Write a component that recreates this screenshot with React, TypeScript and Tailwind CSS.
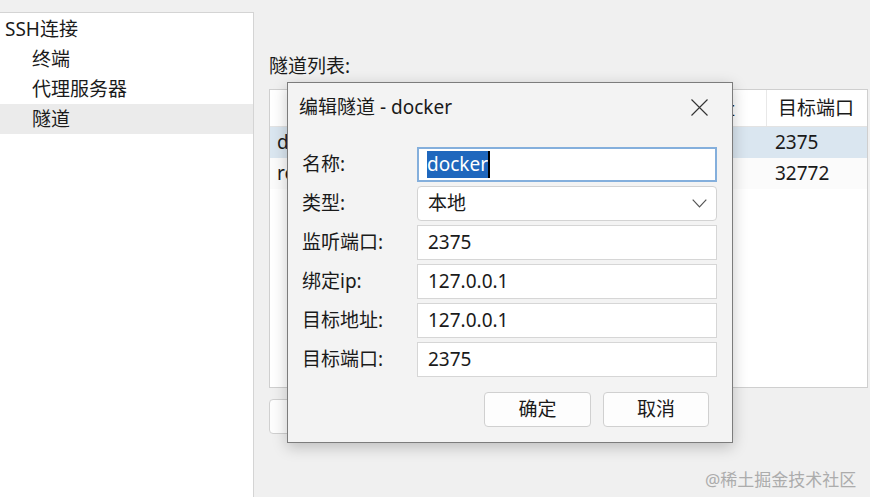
const treeItems = [
    { label: 'SSH连接', level: 0, selected: false },
    { label: '终端', level: 1, selected: false },
    { label: '代理服务器', level: 1, selected: false },
    { label: '隧道', level: 1, selected: true },
];

const tunnels = [
    { name: 'docker', type: '本地', listen: '2375', bind: '127.0.0.1', host: '127.0.0.1', port: '2375' },
    { name: 'redis', type: '本地', listen: '32772', bind: '127.0.0.1', host: '127.0.0.1', port: '32772' },
];

const fields = [
    { label: '监听端口:', value: '2375' },
    { label: '绑定ip:', value: '127.0.0.1' },
    { label: '目标地址:', value: '127.0.0.1' },
    { label: '目标端口:', value: '2375' },
];

export default function App() {
    return (
        <div
            className="relative flex w-[870px] h-[497px] overflow-hidden bg-[#f0f0f0] text-[#1a1a1a] text-[19px]"
            style={{ fontFamily: "'Noto Sans', 'Noto Sans CJK SC', sans-serif" }}
        >
            {/* Left tree */}
            <div className="mt-[12px] w-[254px] shrink-0 bg-white border-t border-r border-[#d4d4d4] pt-[1px]">
                {treeItems.map((item) => (
                    <div
                        key={item.label}
                        className={`h-[30px] flex items-center leading-none ${item.level === 0 ? 'pl-[5px]' : 'pl-[32px]'} ${item.selected ? 'bg-[#ebebeb]' : ''}`}
                    >
                        {item.label}
                    </div>
                ))}
            </div>

            {/* Right content */}
            <div className="flex-1 flex flex-col pl-[15px] pr-[2px]">
                <div className="mt-[52px] h-[28px] leading-[28px]">隧道列表:</div>

                <div className="mt-[9px] h-[299px] bg-white border border-[#cfcfcf]">
                    <div className="flex h-[37px] border-b border-[#e3e3e3] items-center">
                        <div className="w-[100px] h-full flex items-center justify-center">名称</div>
                        <div className="w-[80px] h-full flex items-center justify-center">类型</div>
                        <div className="w-[100px] h-full flex items-center justify-center">监听端口</div>
                        <div className="w-[91px] h-full flex items-center justify-center">绑定ip</div>
                        <div className="w-[126px] pl-[18px] h-full flex items-center border-r border-[#e8e8e8]">目标地址</div>
                        <div className="flex-1 pl-[11px] h-full flex items-center">目标端口</div>
                    </div>
                    {tunnels.map((t, i) => (
                        <div key={t.name} className={`flex h-[31px] items-center ${i === 0 ? 'bg-[#dae6f0]' : 'bg-[#fbfbfb]'}`}>
                            <div className="w-[100px] pl-[7px]">{t.name}</div>
                            <div className="w-[80px] pl-[12px]">{t.type}</div>
                            <div className="w-[100px] pl-[12px]">{t.listen}</div>
                            <div className="w-[91px] pl-[6px]">{t.bind}</div>
                            <div className="w-[127px] pl-[8px]">{t.host}</div>
                            <div className="flex-1 pl-[7px]">{t.port}</div>
                        </div>
                    ))}
                </div>

                <div className="mt-[11px] flex gap-[12px]">
                    <button className="w-[100px] h-[35px] rounded-[4px] border border-[#d0d0d0] bg-[#fdfdfd]">添加</button>
                </div>
            </div>

            {/* Edit dialog */}
            <div className="absolute left-[287px] top-[82px] w-[446px] h-[361px] bg-[#f3f3f3] border border-[#7c7c7c] shadow-[0_4px_14px_rgba(0,0,0,0.22)] flex flex-col">
                <div className="h-[48px] flex items-center justify-between pl-[11px] pr-[24px]">
                    <span>编辑隧道 - docker</span>
                    <svg width="17" height="17" viewBox="0 0 17 17" className="text-[#333]">
                        <path d="M0.5 0.5 L16.5 16.5 M16.5 0.5 L0.5 16.5" stroke="currentColor" strokeWidth="1.1" fill="none" />
                    </svg>
                </div>

                <div className="mt-[16px] flex flex-col gap-[4px] pl-[14px] pr-[15px]">
                    <div className="flex items-center">
                        <div className="w-[115px]">名称:</div>
                        <div className="flex-1 h-[35px] border-2 border-[#84afdc] bg-white flex items-center pl-[8px]">
                            <span className="bg-[#1f67bd] text-white h-[27px] leading-[27px]">docker</span>
                            <span className="w-[2px] h-[27px] bg-black" />
                        </div>
                    </div>
                    <div className="flex items-center">
                        <div className="w-[115px]">类型:</div>
                        <div className="flex-1 h-[35px] rounded-[4px] border border-[#d3d3d3] bg-white flex items-center justify-between pl-[10px] pr-[9px]">
                            <span>本地</span>
                            <svg width="15" height="9" viewBox="0 0 15 9" className="text-[#555]">
                                <path d="M0.7 0.7 L7.5 7.8 L14.3 0.7" stroke="currentColor" strokeWidth="1.2" fill="none" />
                            </svg>
                        </div>
                    </div>
                    {fields.map((f) => (
                        <div key={f.label} className="flex items-center">
                            <div className="w-[115px]">{f.label}</div>
                            <div className="flex-1 h-[35px] border border-[#d6d6d6] bg-white flex items-center pl-[10px]">{f.value}</div>
                        </div>
                    ))}
                </div>

                <div className="mt-[15px] flex justify-end gap-[12px] pr-[23px]">
                    <button className="w-[107px] h-[35px] rounded-[4px] border border-[#d0d0d0] bg-[#fdfdfd]">确定</button>
                    <button className="w-[106px] h-[35px] rounded-[4px] border border-[#d0d0d0] bg-[#fdfdfd]">取消</button>
                </div>
            </div>

            <div className="absolute left-[705px] top-[469px] text-[17px] leading-[22px] text-[#acacac]">@稀土掘金技术社区</div>
        </div>
    );
}
